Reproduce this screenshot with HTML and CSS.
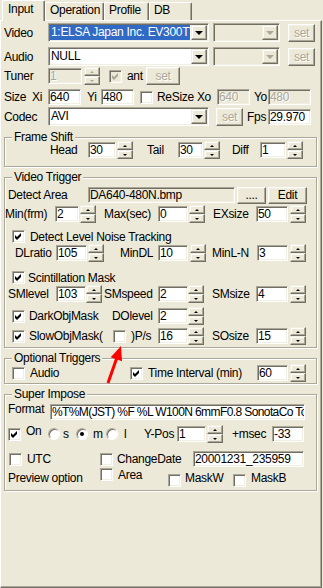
FILE: index.html
```html
<!DOCTYPE html>
<html>
<head>
<meta charset="utf-8">
<link rel="stylesheet" href="styles.css">
</head>
<body>
<div class="dlg">
  <div class="tabs">
    <div class="tab sel t-input">Input</div>
    <div class="tab t-op">Operation</div>
    <div class="tab t-prof">Profile</div>
    <div class="tab t-db">DB</div>
  </div>

  <div class="panel">
    <div class="row r-cmb mt2">
      <span class="lbl w44">Video</span>
      <div class="cmb w161"><span class="val hl">1:ELSA Japan Inc. EV300TV Capture</span><span class="drop"></span></div>
      <div class="cmb off ml4 w67"><span class="val"></span><span class="drop"></span></div>
      <div class="btn off ml8 w27">set</div>
    </div>

    <div class="row r-cmb mt5">
      <span class="lbl w44">Audio</span>
      <div class="cmb w161"><span class="val">NULL</span><span class="drop"></span></div>
      <div class="cmb off ml4 w67"><span class="val"></span><span class="drop"></span></div>
      <div class="btn off ml8 w27">set</div>
    </div>

    <div class="row mt2">
      <span class="lbl w44">Tuner</span>
      <div class="ed off w34">1</div>
      <div class="spin off ml2"><i></i><i></i></div>
      <span class="chk off ml9"><svg viewBox="0 0 7 7"><polygon points="0,2 2,4 6,0 6,3 2,7 0,5"/></svg></span>
      <span class="lbl ml5 w16">ant</span>
      <div class="btn off ml3 w34">set</div>
    </div>

    <div class="row mt5">
      <span class="lbl w28">Size</span>
      <span class="lbl w16">Xi</span>
      <div class="ed w33">640</div>
      <span class="lbl ml6 w14">Yi</span>
      <div class="ed w33">480</div>
      <span class="chk ml6"></span>
      <span class="lbl ml4 w60">ReSize Xo</span>
      <div class="ed off w33">640</div>
      <span class="lbl ml4 w14">Yo</span>
      <div class="ed off w43">480</div>
    </div>

    <div class="row r-cmb mt2">
      <span class="lbl w44">Codec</span>
      <div class="cmb w161"><span class="val">AVI</span><span class="drop"></span></div>
      <div class="btn off ml7 w27">set</div>
      <span class="lbl ml4 w21">Fps</span>
      <div class="ed w43">29.970</div>
    </div>

    <fieldset class="grp mt6 pb8">
      <legend>Frame Shift</legend>
      <div class="row">
        <span class="lbl ml45 w38">Head</span>
        <div class="ed w28">30</div>
        <div class="spin ml1"><i></i><i></i></div>
        <span class="lbl ml14 w31">Tail</span>
        <div class="ed w25">30</div>
        <div class="spin ml1"><i></i><i></i></div>
        <span class="lbl ml12 w28">Diff</span>
        <div class="ed w26">1</div>
        <div class="spin ml1"><i></i><i></i></div>
      </div>
    </fieldset>

    <fieldset class="grp mt5 pb3">
      <legend>Video Trigger</legend>
      <div class="row mt5">
        <span class="lbl ml3 w80">Detect Area</span>
        <div class="ed ro w147">DA640-480N.bmp</div>
        <div class="btn h16 ml2 w29">....</div>
        <div class="btn h16 ml2 w39">Edit</div>
      </div>
      <div class="row mt3">
        <span class="lbl w50">Min(frm)</span>
        <div class="ed w24">2</div>
        <div class="spin ml1"><i></i><i></i></div>
        <span class="lbl ml8 w54">Max(sec)</span>
        <div class="ed w30">0</div>
        <div class="spin ml1"><i></i><i></i></div>
        <span class="lbl ml8 w43">EXsize</span>
        <div class="ed w32">50</div>
        <div class="spin ml2"><i></i><i></i></div>
      </div>
      <div class="row r-chk mt7">
        <span class="chk ml7"><svg viewBox="0 0 7 7"><polygon points="0,2 2,4 6,0 6,3 2,7 0,5"/></svg></span>
        <span class="lbl ml5">Detect Level Noise Tracking</span>
      </div>
      <div class="row mt1">
        <span class="lbl ml10 w41">DLratio</span>
        <div class="ed w31">105</div>
        <div class="spin ml1"><i></i><i></i></div>
        <span class="lbl ml16 w38">MinDL</span>
        <div class="ed w30">10</div>
        <div class="spin ml2"><i></i><i></i></div>
        <span class="lbl ml6 w45">MinL-N</span>
        <div class="ed w31">3</div>
        <div class="spin ml2"><i></i><i></i></div>
      </div>
      <div class="row r-chk mt9">
        <span class="chk ml7"><svg viewBox="0 0 7 7"><polygon points="0,2 2,4 6,0 6,3 2,7 0,5"/></svg></span>
        <span class="lbl ml3">Scintillation Mask</span>
      </div>
      <div class="row mt1">
        <span class="lbl ml3 w48">SMlevel</span>
        <div class="ed w30">103</div>
        <div class="spin"><i></i><i></i></div>
        <span class="lbl ml2 w54">SMspeed</span>
        <div class="ed w30">2</div>
        <div class="spin"><i></i><i></i></div>
        <span class="lbl ml8 w44">SMsize</span>
        <div class="ed w32">4</div>
        <div class="spin ml2"><i></i><i></i></div>
      </div>
      <div class="row mt6">
        <span class="chk ml7"><svg viewBox="0 0 7 7"><polygon points="0,2 2,4 6,0 6,3 2,7 0,5"/></svg></span>
        <span class="lbl ml4 w83">DarkObjMask</span>
        <span class="lbl w46">DOlevel</span>
        <div class="ed w30">2</div>
        <div class="spin"><i></i><i></i></div>
      </div>
      <div class="row mt4">
        <span class="chk ml7"><svg viewBox="0 0 7 7"><polygon points="0,2 2,4 6,0 6,3 2,7 0,5"/></svg></span>
        <span class="lbl ml4 w84">SlowObjMask(</span>
        <span class="chk"></span>
        <span class="lbl ml5 w27">)P/s</span>
        <div class="ed w30">16</div>
        <div class="spin"><i></i><i></i></div>
        <span class="lbl ml8 w44">SOsize</span>
        <div class="ed w32">15</div>
        <div class="spin ml2"><i></i><i></i></div>
      </div>
    </fieldset>

    <fieldset class="grp mt5 pb2">
      <legend>Optional Triggers</legend>
      <div class="row mt2">
        <span class="chk ml7"></span>
        <span class="lbl ml5 w100">Audio</span>
        <span class="chk"><svg viewBox="0 0 7 7"><polygon points="0,2 2,4 6,0 6,3 2,7 0,5"/></svg></span>
        <span class="lbl ml5 w109">Time Interval (min)</span>
        <div class="ed w31">60</div>
        <div class="spin ml2"><i></i><i></i></div>
      </div>
    </fieldset>

    <fieldset class="grp mt5 pb4">
      <legend>Super Impose</legend>
      <div class="row mt5">
        <span class="lbl ml3 w42 up">Format</span>
        <div class="ed tight w255">%T%M(JST) %F %L W100N 6mmF0.8 SonotaCo Tokyo</div>
      </div>
      <div class="row mt6">
        <span class="chk ml3"><svg viewBox="0 0 7 7"><polygon points="0,2 2,4 6,0 6,3 2,7 0,5"/></svg></span>
        <span class="lbl ml5 w17 up">On</span>
        <span class="rad ml5"></span>
        <span class="lbl ml3 w10">s</span>
        <span class="rad on ml3"></span>
        <span class="lbl ml5 w13">m</span>
        <span class="rad"></span>
        <span class="lbl ml6 w20">l</span>
        <span class="lbl w33">Y-Pos</span>
        <div class="ed w29">1</div>
        <div class="spin ml1"><i></i><i></i></div>
        <span class="lbl ml9 w40">+msec</span>
        <div class="ed w32">-33</div>
      </div>
      <div class="row mt9">
        <span class="chk ml4"></span>
        <span class="lbl ml5 w73">UTC</span>
        <span class="chk"></span>
        <span class="lbl ml4 w76">ChangeDate</span>
        <div class="ed w111">20001231_235959</div>
      </div>
      <div class="row mt3">
        <span class="lbl ml3 w92">Preview option</span>
        <span class="chk up"></span>
        <span class="lbl ml5 w50 up">Area</span>
        <span class="chk dn"></span>
        <span class="lbl ml4 w48">MaskW</span>
        <span class="chk dn"></span>
        <span class="lbl ml5">MaskB</span>
      </div>
    </fieldset>
  </div>

  <svg class="arrow" width="30" height="48" viewBox="0 0 30 48">
    <path d="M10 43 L18.6 18.5" stroke="#f00" stroke-width="3"/>
    <polygon points="23,6 24,21.2 12.7,17.2" fill="#f00"/>
  </svg>
</div>
</body>
</html>
```

FILE: styles.css
```css
* {
  box-sizing: border-box;
}

body {
  margin: 0;
  background: #ece9d8;
  color: #000;
  font: 12px/14px "Liberation Sans", Arial, sans-serif;
  letter-spacing: -0.3px;
}

.dlg {
  position: relative;
  width: 323px;
  height: 588px;
}

/* ===== Tabs ===== */
.tabs {
  display: flex;
  align-items: flex-end;
  height: 20px;
  padding-left: 2px;
}

.tab {
  height: 18px;
  padding: 0 0 0 4px;
  border: 1px solid;
  border-color: #fff #716f64 transparent #fff;
  border-bottom: 0;
  border-radius: 2px 2px 0 0;
  box-shadow: inset -1px 0 #aca899;
  white-space: nowrap;
}

.tab.sel {
  position: relative;
  z-index: 1;
  height: 21px;
  margin-bottom: -1px;
  padding: 1px 0 0 5px;
  background: #ece9d8;
}

.t-input { width: 43px; }
.t-op { width: 59px; }
.t-prof { width: 45px; }
.t-db { width: 43px; }

.panel {
  width: 322px;
  height: 568px;
  padding-left: 3px;
  border-top: 1px solid #fff;
  border-left: 1px solid #fff;
  border-right: 1px solid #716f64;
  border-bottom: 1px solid #716f64;
  box-shadow: inset -1px -1px #aca899;
}

/* ===== Rows ===== */
.row {
  display: flex;
  align-items: center;
  height: 16px;
  white-space: nowrap;
}

.r-cmb { height: 19px; }
.r-chk { height: 15px; }

.lbl {
  flex-shrink: 0;
}

.up { align-self: flex-start; margin-top: -2px; }
.dn { margin-top: 4px; }

/* ===== Group boxes ===== */
.grp {
  width: 313px;
  margin: 0;
  padding: 0;
  min-width: 0;
  border: 1px solid #aca899;
  box-shadow: inset 1px 1px #fff, 1px 1px #fff;
}

.grp legend {
  height: 10px;
  line-height: 10px;
  margin-left: 7px;
  padding: 0 2px;
  background: #ece9d8;
}

/* ===== Controls ===== */
.ed {
  flex-shrink: 0;
  display: flex;
  align-items: center;
  height: 16px;
  padding: 0 1px;
  overflow: hidden;
  border: 1px solid;
  border-color: #aca899 #fff #fff #aca899;
  box-shadow: inset 1px 1px #716f64, inset -1px -1px #f1efe2;
  background: #fff;
}

.ed.tight { letter-spacing: -0.6px; }

.ed.off {
  background: #ece9d8;
  color: #aca899;
  text-shadow: 1px 1px #fff;
}

.ed.ro {
  background: #ece9d8;
}

.btn {
  flex-shrink: 0;
  display: flex;
  align-items: center;
  justify-content: center;
  height: 18px;
  border: 1px solid;
  border-color: #fff #716f64 #716f64 #fff;
  box-shadow: inset -1px -1px #aca899, inset 1px 1px #f1efe2;
}

.btn.h16 { height: 17px; }

.btn.off {
  color: #aca899;
  text-shadow: 1px 1px #fff;
}

.cmb {
  flex-shrink: 0;
  display: flex;
  height: 19px;
  padding: 1px;
  border: 1px solid;
  border-color: #aca899 #fff #fff #aca899;
  box-shadow: inset 1px 1px #716f64, inset -1px -1px #f1efe2;
  background: #fff;
}

.cmb .val {
  flex: 1;
  overflow: hidden;
  padding-left: 1px;
  line-height: 15px;
}

.cmb .val.hl {
  background: #316ac5;
  color: #fff;
  margin-right: 1px;
}

.cmb.off { background: #ece9d8; }

.drop {
  display: flex;
  align-items: center;
  justify-content: center;
  width: 16px;
  border: 1px solid;
  border-color: #f1efe2 #716f64 #716f64 #f1efe2;
  box-shadow: inset -1px -1px #aca899, inset 1px 1px #fff;
  background: #ece9d8;
}

.drop::after {
  content: "";
  border-left: 4px solid transparent;
  border-right: 4px solid transparent;
  border-top: 4px solid #000;
  margin-top: 1px;
}

.cmb.off .drop::after { border-top-color: #aca899; }

.spin {
  flex-shrink: 0;
  display: flex;
  flex-direction: column;
  width: 16px;
  height: 18px;
}

.spin i {
  flex: 1;
  display: flex;
  align-items: center;
  justify-content: center;
  border: 1px solid;
  border-color: #f1efe2 #716f64 #716f64 #f1efe2;
  box-shadow: inset -1px -1px #aca899, inset 1px 1px #fff;
}

.spin i::after {
  content: "";
  border-left: 2px solid transparent;
  border-right: 2px solid transparent;
  border-bottom: 2px solid #000;
}

.spin i + i::after {
  border-bottom: 0;
  border-top: 2px solid #000;
}

.spin.off i::after { border-bottom-color: #aca899; }
.spin.off i + i::after { border-top-color: #aca899; }

.chk {
  flex-shrink: 0;
  display: flex;
  align-items: center;
  justify-content: center;
  width: 13px;
  height: 13px;
  border: 1px solid;
  border-color: #aca899 #fff #fff #aca899;
  box-shadow: inset 1px 1px #716f64, inset -1px -1px #f1efe2;
  background: #fff;
}

.chk svg {
  width: 7px;
  height: 7px;
  fill: #000;
}

.chk.off { background: #ece9d8; }
.chk.off svg { fill: #aca899; }

.rad {
  flex-shrink: 0;
  display: flex;
  align-items: center;
  justify-content: center;
  width: 12px;
  height: 12px;
  border-radius: 50%;
  border: 1px solid;
  border-color: #aca899 #fff #fff #aca899;
  box-shadow: inset 1px 1px #716f64;
  background: #fff;
}

.rad.on::after {
  content: "";
  width: 4px;
  height: 4px;
  border-radius: 50%;
  background: #000;
}

.arrow {
  position: absolute;
  left: 98px;
  top: 340px;
}

/* ===== Spacing ===== */
.mt1 { margin-top: 1px; }
.mt2 { margin-top: 2px; }
.mt3 { margin-top: 3px; }
.mt4 { margin-top: 4px; }
.mt5 { margin-top: 5px; }
.mt6 { margin-top: 6px; }
.mt7 { margin-top: 7px; }
.mt9 { margin-top: 9px; }

.pb2 { padding-bottom: 2px; }
.pb3 { padding-bottom: 3px; }
.pb4 { padding-bottom: 4px; }
.pb8 { padding-bottom: 8px; }

.ml1 { margin-left: 1px; }
.ml2 { margin-left: 2px; }
.ml3 { margin-left: 3px; }
.ml4 { margin-left: 4px; }
.ml5 { margin-left: 5px; }
.ml6 { margin-left: 6px; }
.ml7 { margin-left: 7px; }
.ml8 { margin-left: 8px; }
.ml9 { margin-left: 9px; }
.ml10 { margin-left: 10px; }
.ml12 { margin-left: 12px; }
.ml14 { margin-left: 14px; }
.ml16 { margin-left: 16px; }
.ml45 { margin-left: 45px; }

.w10 { width: 10px; }
.w13 { width: 13px; }
.w14 { width: 14px; }
.w16 { width: 16px; }
.w17 { width: 17px; }
.w20 { width: 20px; }
.w21 { width: 21px; }
.w24 { width: 24px; }
.w25 { width: 25px; }
.w26 { width: 26px; }
.w27 { width: 27px; }
.w28 { width: 28px; }
.w29 { width: 29px; }
.w30 { width: 30px; }
.w31 { width: 31px; }
.w32 { width: 32px; }
.w33 { width: 33px; }
.w34 { width: 34px; }
.w38 { width: 38px; }
.w39 { width: 39px; }
.w40 { width: 40px; }
.w41 { width: 41px; }
.w42 { width: 42px; }
.w43 { width: 43px; }
.w44 { width: 44px; }
.w45 { width: 45px; }
.w46 { width: 46px; }
.w48 { width: 48px; }
.w50 { width: 50px; }
.w54 { width: 54px; }
.w60 { width: 60px; }
.w67 { width: 67px; }
.w73 { width: 73px; }
.w76 { width: 76px; }
.w80 { width: 80px; }
.w83 { width: 83px; }
.w84 { width: 84px; }
.w92 { width: 92px; }
.w100 { width: 100px; }
.w109 { width: 109px; }
.w111 { width: 111px; }
.w147 { width: 147px; }
.w161 { width: 161px; }
.w255 { width: 255px; }
```
